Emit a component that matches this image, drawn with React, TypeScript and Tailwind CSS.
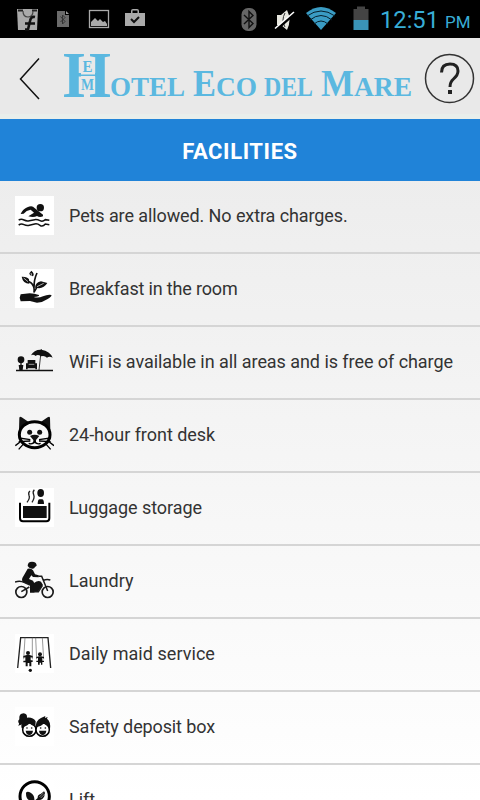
import type { ReactNode } from "react";

const SwimIcon = () => (
	<>
		<circle cx="76" cy="35" r="11" />
		<path d="M17 54Q22 41 37 34Q48 28 54 32L84 56L84 61Q74 66 66 60Q56 66 40 61L57 50L47 41Q34 43 26 53Z" />
		<path
			d="M11 72Q19 68 27 72T43 74T59 71T75 74T91 71L103 73M11 87Q19 82 27 86T43 88T59 84T75 88T91 84L103 86"
			fill="none"
			stroke="#111"
			strokeWidth="4.5"
		/>
	</>
);

const PlantIcon = () => (
	<>
		<path d="M17 76L44 73Q58 74 72 78Q75 83 56 84Q70 88 84 82Q98 76 109 78Q112 81 98 90Q84 100 66 101L45 96L17 97L14 86Z" />
		<path d="M20 23Q37 22 42 31L43 44Q24 44 20 23ZM49 5Q60 14 54 22Q43 20 43 13ZM60 56Q62 39 78 37L97 42Q86 60 67 57Z" />
		<path
			d="M57 71Q59 55 53 48Q50 40 36 36M57 56Q57 30 66 12M58 68L67 53L84 45"
			fill="none"
			stroke="#111"
			strokeWidth="5"
		/>
		<path d="M26 27L39 38M66 53L86 43M48 12L50 20" stroke="#fff" strokeWidth="2" />
	</>
);

const TerraceIcon = () => (
	<>
		<path d="M3 83H114V88H3ZM48 40Q57 22 79 23Q105 27 113 47Q103 42 96 47Q88 39 78 43Q68 36 62 42Q55 36 48 40Z" />
		<path d="M79 21L72 84" stroke="#111" strokeWidth="2.5" />
		<circle cx="18" cy="53" r="10" />
		<path d="M16 60H20V69H25L23 84H13L11 69H16ZM38 54H61V64H66V82H61V79H38V82H33V64H38Z" />
		<path d="M41 67H58" stroke="#ddd" strokeWidth="2" />
	</>
);

const CatIcon = () => (
	<>
		<path d="M12 47L13 9Q14 3 20 7L42 22ZM106 47L105 9Q104 3 98 7L76 22Z" />
		<ellipse cx="59" cy="59" rx="46" ry="39" fill="#f8f8f8" stroke="#000" strokeWidth="9" />
		<circle cx="44" cy="52" r="7.5" />
		<circle cx="74" cy="52" r="7.5" />
		<path d="M45 63Q59 56 73 63L63 75V85H55V75Z" />
		<path
			d="M41 85Q53 90 59 79Q65 90 77 85M46 74L12 69M46 78L11 80M72 74L106 69M72 78L107 80M20 77L1 92M27 85L11 103M98 77L117 92M91 85L107 103"
			fill="none"
			stroke="#000"
			strokeWidth="4"
		/>
	</>
);

const HotTubIcon = () => (
	<>
		<path
			d="M15 44V91Q15 100 24 100H94Q103 100 103 91V44"
			fill="none"
			stroke="#000"
			strokeWidth="6"
		/>
		<path d="M24 54H95V90H24ZM68 48Q68 34 74 34H81Q87 34 87 48Z" />
		<ellipse cx="77" cy="15" rx="10" ry="12" />
		<path
			d="M45 9Q39 13 42 22Q46 30 36 43M58 5Q52 11 56 20Q60 29 51 43"
			fill="none"
			stroke="#222"
			strokeWidth="4"
		/>
	</>
);

const MotorbikeIcon = () => (
	<>
		<circle cx="19" cy="93" r="16.5" fill="none" stroke="#1a1a1a" strokeWidth="5" />
		<circle cx="98" cy="93" r="16.5" fill="none" stroke="#1a1a1a" strokeWidth="5" />
		<path d="M38 15Q38 2 51 2Q65 2 65 14L60 18Q58 24 51 23Q41 21 38 15Z" />
		<path d="M38 23Q48 20 54 28L60 40L71 43V49L54 48L49 43L42 54L54 59L58 67V95H45V73L23 62Q18 55 26 44Z" />
		<path d="M57 66Q69 57 78 62L84 72L70 91H55Z" />
		<path
			d="M70 46H80L98 90M0 63Q15 57 29 65L45 72M84 59Q95 53 106 57M19 92L43 78M57 92H70L82 74"
			fill="none"
			stroke="#1a1a1a"
			strokeWidth="4.5"
		/>
	</>
);

const SwingIcon = () => (
	<>
		<path d="M8 102L17 11H99L107 102" fill="none" stroke="#222" strokeWidth="4" />
		<path d="M30 11L26 76M52 11V76M62 11L65 76M82 11L86 76" fill="none" stroke="#666" strokeWidth="2" />
		<circle cx="39" cy="57" r="6" />
		<circle cx="75" cy="61" r="6" />
		<path d="M25 66L35 63H44L53 66V71L47 70V79H53V84H49V97H43V87H38V97H32V85H25V80H31V70L25 71ZM64 69L72 67H79L87 69V73L82 72V80H87V84H82V92H78V86H74V92H69V84H64V80H69V72L64 73Z" />
		<circle cx="46" cy="109" r="5" />
	</>
);

const KidsIcon = () => (
	<>
		<path d="M20 64Q16 50 26 40Q22 44 21 50Q17 56 9 55Q15 52 10 46Q8 42 13 37Q11 19 26 19Q37 20 36 32Q54 30 62 43L61 60Z" />
		<path d="M62 62Q62 40 78 33L91 27L90 33L98 30L96 35Q108 44 105 66Z" />
		<circle cx="43" cy="68" r="20" fill="#fff" stroke="#000" strokeWidth="4.5" />
		<circle cx="83" cy="68" r="20" fill="#fff" stroke="#000" strokeWidth="4.500" />
		<path d="M24 60Q38 57 43 49Q50 56 62 60Q57 43 43 44Q27 46 24 60ZM64 60Q80 59 87 48Q93 56 102 60Q99 44 84 44Q67 45 64 60Z" />
		<circle cx="36" cy="63" r="2.500" />
		<circle cx="50" cy="63" r="2.500" />
		<circle cx="77" cy="63" r="2.500" />
		<circle cx="91" cy="63" r="2.500" />
		<path d="M32 71H54Q52 84 43 84T32 71ZM72 71H94Q92 84 83 84T72 71Z" />
	</>
);

const RestaurantIcon = () => (
	<>
		<circle cx="59" cy="49" r="44" fill="#fff" stroke="#000" strokeWidth="9" />
		<path d="M33 38Q37 32 47 38Q59 46 58 59L85 87L80 91L52 64Q32 61 33 38Z" />
		<path d="M32 87L68 54Q67 44 77 42L87 34L90 38L88 49Q83 60 73 60L37 92Z" />
		<path d="M73 51L86 38M77 54L89 42" stroke="#bbb" strokeWidth="2" />
	</>
);

const facilities: { label: string; icon: ReactNode; tile: string; spacing: string }[] = [
	{ label: "Pets are allowed. No extra charges.", icon: <SwimIcon />, tile: "bg-white", spacing: "tracking-[-0.1px]" },
	{ label: "Breakfast in the room", icon: <PlantIcon />, tile: "bg-white", spacing: "tracking-[-0.17px]" },
	{ label: "WiFi is available in all areas and is free of charge", icon: <TerraceIcon />, tile: "", spacing: "tracking-[-0.055px]" },
	{ label: "24-hour front desk", icon: <CatIcon />, tile: "", spacing: "tracking-[-0.03px]" },
	{ label: "Luggage storage", icon: <HotTubIcon />, tile: "bg-white", spacing: "tracking-[-0.05px]" },
	{ label: "Laundry", icon: <MotorbikeIcon />, tile: "", spacing: "tracking-[0.03px]" },
	{ label: "Daily maid service", icon: <SwingIcon />, tile: "bg-white", spacing: "tracking-[0.05px]" },
	{ label: "Safety deposit box", icon: <KidsIcon />, tile: "bg-white", spacing: "tracking-[-0.12px]" },
	{ label: "Lift", icon: <RestaurantIcon />, tile: "bg-white", spacing: "" },
];

const StatusBar = () => (
	<div className="flex h-[38px] shrink-0 items-center bg-black">
		<svg className="h-[38px] w-[160px]" viewBox="0 0 160 38">
			<path d="M17 9H38L37 30H18Z" fill="#aaa" />
			<path d="M18 10.500H23M32 10.500H37" stroke="#222" strokeWidth="2" />
			<path d="M23 11Q23 17 28 17T33 11" fill="none" stroke="#444" strokeWidth="1.200" />
			<path d="M35 17Q31 16 30 21L28 29.500H25M25 23.500H35" fill="none" stroke="#111" strokeWidth="2.600" />
			<path d="M57 11H65V15H69V27H57Z" fill="#6b6b6b" />
			<path d="M66 11L69 14H66Z" fill="#999" />
			<path d="M60.500 16.500L65 21.500L62.500 24V15L65 17.500L60.500 22" fill="none" stroke="#333" />
			<rect x="89.500" y="10.500" width="19" height="17" fill="none" stroke="#aaa" strokeWidth="1.300" />
			<path d="M91 26V22L95 18L98 21L100 19L103 22L105 21L107 24V26Z" fill="#aaa" />
			<path d="M125 13H131V11Q131 9 133 9H137Q139 9 139 11V13H145V26H125ZM132.500 13H137.500V10.500H132.500Z" fill="#aaa" fillRule="evenodd" />
			<path d="M131 19L134 22L139 17" fill="none" stroke="#111" strokeWidth="2" />
		</svg>
		<svg className="ml-[70px] h-[38px] w-[146px]" viewBox="230 0 146 38">
			<rect x="241.500" y="8" width="15" height="23" rx="6.500" fill="#666" />
			<path d="M244 15L253 23.500L249 27.500V11.500L253 15.500L244 24" fill="none" stroke="#111" strokeWidth="1.400" />
			<path d="M277 15H281L287 10Q292 20 287 30L281 25H277Z" fill="#e8e8e0" />
			<path d="M285 13Q281 20 285 27" fill="none" stroke="#333" />
			<path d="M276 30L295 13" stroke="#000" strokeWidth="3" />
			<path d="M275 28.500L294 12" stroke="#fff" strokeWidth="1.600" />
			<path d="M306 13Q321 1 336 13L321 30Z" fill="#3a9cc4" />
			<path d="M307 16Q321 6 335 16M310 20Q321 11 332 20M314 24Q321 18 328 24" fill="none" stroke="#06202c" strokeWidth="1" />
			<path d="M353.500 9H357V6.500H365V9H368.500V20H353.500Z" fill="#444" />
			<rect x="353.500" y="20" width="15" height="10" fill="#3a94b8" />
		</svg>
		<svg className="h-[38px] w-[104px]" viewBox="376 0 104 38" fill="#38add6" fontFamily="Roboto, sans-serif">
			<text x="380" y="28" fontSize="24" textLength="59" lengthAdjust="spacingAndGlyphs">12:51</text>
			<text x="445" y="28" fontSize="16.500" textLength="25.500" lengthAdjust="spacingAndGlyphs">PM</text>
		</svg>
	</div>
);

const Header = () => (
	<div className="h-[81px] shrink-0 border-b-[5px] border-[#e9eeeb] bg-[#e9e9e9]">
		<svg className="h-[76px] w-[480px]" viewBox="0 38 480 76">
			<path d="M39 58.500L20.500 79L39 99" fill="none" stroke="#111" strokeWidth="1.500" />
			<g fill="#5bb8e0" fontFamily="'Liberation Serif', serif" fontWeight="700">
				<text x="63" y="97" fontSize="66" textLength="48" lengthAdjust="spacingAndGlyphs">H</text>
				<rect x="81" y="70" width="14" height="10" fill="#e9e9e9" />
				<rect x="79" y="74.500" width="17" height="1.500" />
				<text x="82.500" y="71.500" fontSize="17" textLength="10" lengthAdjust="spacingAndGlyphs">E</text>
				<text x="81" y="90" fontSize="17" textLength="13" lengthAdjust="spacingAndGlyphs">M</text>
				<text x="110" y="96" fontSize="28" textLength="75" lengthAdjust="spacingAndGlyphs">OTEL</text>
				<text x="193" y="96" fontSize="37" textLength="23" lengthAdjust="spacingAndGlyphs">E</text>
				<text x="216" y="96" fontSize="28" textLength="41" lengthAdjust="spacingAndGlyphs">CO</text>
				<text x="264" y="96" fontSize="28" textLength="49" lengthAdjust="spacingAndGlyphs">DEL</text>
				<text x="321" y="96" fontSize="37" textLength="33" lengthAdjust="spacingAndGlyphs">M</text>
				<text x="354" y="96" fontSize="28" textLength="58" lengthAdjust="spacingAndGlyphs">ARE</text>
			</g>
			<circle cx="449.500" cy="78.500" r="24" fill="none" stroke="#333" strokeWidth="1.500" />
			<path d="M441.500 72.500Q441.500 64 450 64Q458 64 458 71Q458 75 453.500 79Q450 82 450 87" fill="none" stroke="#222" strokeWidth="3" />
			<rect x="448" y="90" width="4" height="4" fill="#222" />
		</svg>
	</div>
);

export default () => {
	return (
		<div className="flex h-[800px] w-[480px] flex-col overflow-hidden bg-linear-to-b from-[#e8e8e8] to-white font-[Roboto,sans-serif]">
			<StatusBar />
			<Header />
			<div className="flex h-[62px] shrink-0 items-center justify-center bg-[#2083d8] pt-[3px]">
				<h1 className="text-[22px] font-bold tracking-[0.6px] text-white">FACILITIES</h1>
			</div>
			<ul>
				{facilities.map((f) => (
					<li
						key={f.label}
						className="flex h-[73px] items-center border-b-2 border-[#d5d5d5] pb-[2px] pl-[15px]"
					>
						<div className={`h-[39px] w-[39px] ${f.tile}`}>
							<svg className="h-full w-full" viewBox="0 0 117 117" fill="#111">
								{f.icon}
							</svg>
						</div>
						<span className={`ml-[15px] whitespace-nowrap text-[18px] text-[#333] ${f.spacing}`}>
							{f.label}
						</span>
					</li>
				))}
			</ul>
		</div>
	);
};
